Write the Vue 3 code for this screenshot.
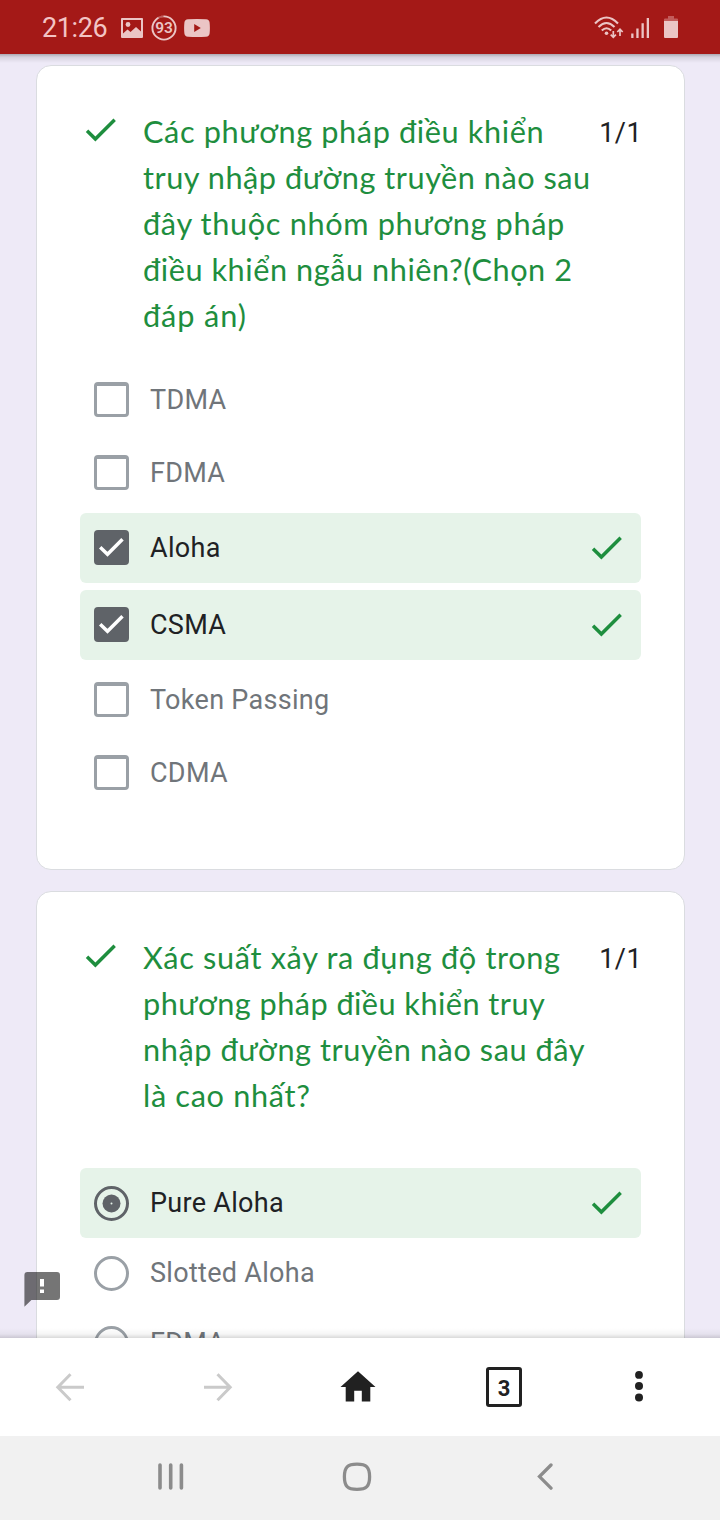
<script setup>
const questions = [
  {
    type: 'checkbox',
    score: '1/1',
    lines: [
      { text: 'Các phương pháp điều khiển', spacing: 0.61 },
      { text: 'truy nhập đường truyền nào sau', spacing: 0.52 },
      { text: 'đây thuộc nhóm phương pháp', spacing: 0.65 },
      { text: 'điều khiển ngẫu nhiên?(Chọn 2', spacing: 0.55 },
      { text: 'đáp án)', spacing: 0.9 },
    ],
    options: [
      { text: 'TDMA' },
      { text: 'FDMA' },
      { text: 'Aloha', correct: true },
      { text: 'CSMA', correct: true },
      { text: 'Token Passing' },
      { text: 'CDMA' },
    ],
  },
  {
    type: 'radio',
    score: '1/1',
    lines: [
      { text: 'Xác suất xảy ra đụng độ trong', spacing: 0.66 },
      { text: 'phương pháp điều khiển truy', spacing: 0.45 },
      { text: 'nhập đường truyền nào sau đây', spacing: 0.57 },
      { text: 'là cao nhất?', spacing: 0.67 },
    ],
    options: [
      { text: 'Pure Aloha', correct: true },
      { text: 'Slotted Aloha' },
      { text: 'FDMA' },
    ],
  },
]
const checkPath = 'M9 16.17L4.83 12l-1.42 1.41L9 19 21 7l-1.41-1.41z'
</script>

<template>
  <div class="screen">
    <header class="status">
      <span class="clock">21:26</span>
      <svg class="s-image" width="22" height="20" viewBox="0 0 22 20">
        <path fill="currentColor" fill-rule="evenodd" d="M1.5 0h19A1.3 1.3 0 0 1 22 1.4v17.2a1.3 1.3 0 0 1-1.4 1.4H1.4A1.3 1.3 0 0 1 0 18.600V1.400A1.300 1.300 0 0 1 1.500 0zM2 2v13.500l4.500-4 3 2.500 5.500-5 5 4.500V2z" />
        <circle cx="7" cy="6.500" r="2.400" fill="currentColor" />
      </svg>
      <span class="s-badge">
        <svg width="26" height="26" viewBox="0 0 26 26">
          <circle cx="13" cy="13" r="11.600" fill="none" stroke="currentColor" stroke-width="1.900" />
          <path d="M7.500 2.800A11.600 11.600 0 0 1 12.500 1.400" fill="none" stroke="#a41917" stroke-opacity=".6" stroke-width="2.200" />
        </svg>
        <b>93</b>
      </span>
      <svg class="s-video" width="26" height="18" viewBox="0 0 26 18">
        <path fill="currentColor" fill-rule="evenodd" d="M4 .3Q13-.3 22 .3q3.300.2 3.600 3.200.6 5.500 0 11-.3 3-3.600 3.200-9 .6-18 0-3.300-.2-3.600-3.200-.6-5.500 0-11Q.7.500 4 .3zM10.200 5v8l6.600-4z" />
      </svg>
      <span class="grow"></span>
      <svg class="s-wifi" width="30" height="24" viewBox="0 0 30 24">
        <g fill="none" stroke="currentColor" stroke-width="2.100">
          <path d="M1 7.500Q12.500-4.500 24 7.500" />
          <path d="M4.500 11Q12.500 3 20.500 11" />
          <path d="M7.800 14.500Q12.500 10 17.200 14.500" />
        </g>
        <circle cx="12.500" cy="17.300" r="1.800" fill="currentColor" />
        <path d="M19.300 15v6M16.700 18.700l2.600 2.600 2.600-2.600M26 20v-6.500M23.300 16l2.700-2.700 2.700 2.700" fill="none" stroke="currentColor" stroke-width="1.700" />
      </svg>
      <svg class="s-signal" width="19" height="20" viewBox="0 0 19 20">
        <path fill="currentColor" d="M.2 15.500h2.300V20H.2zM5.300 10.500h2.300V20H5.300zM10.500 5.200h2.300V20h-2.300zM15.700 0H18v20h-2.300z" />
      </svg>
      <svg class="s-battery" width="14" height="22" viewBox="0 0 14 22">
        <path fill="#c35c5b" d="M4 0h6v2.500h3a1 1 0 0 1 1 1V5H0V3.500a1 1 0 0 1 1-1h3z" />
        <path fill="#ebc5c5" d="M0 5h14v16a1 1 0 0 1-1 1H1a1 1 0 0 1-1-1z" />
      </svg>
    </header>

    <main class="content">
      <section v-for="(q, qi) in questions" :key="qi" class="card">
        <div class="head">
          <svg class="check" width="41" height="41" viewBox="0 0 24 24"><path :d="checkPath" /></svg>
          <h2 class="title">
            <span v-for="l in q.lines" :key="l.text" class="line" :style="{ letterSpacing: l.spacing + 'px' }">{{ l.text }}</span>
          </h2>
          <span class="score">{{ q.score }}</span>
        </div>
        <ul :class="['options', q.type]">
          <li v-for="o in q.options" :key="o.text" :class="['option', { correct: o.correct }]">
            <span :class="['control', q.type, { on: o.correct }]">
              <svg v-if="o.correct && q.type === 'checkbox'" width="35" height="35" viewBox="0 0 35 35">
                <path d="M6.200 17.300L13.500 24.300 28.500 9.200" fill="none" stroke="#fff" stroke-width="3.500" />
              </svg>
              <svg v-else-if="o.correct" width="35" height="35" viewBox="0 0 35 35">
                <circle cx="17.500" cy="17.500" r="9" fill="#5f6368" />
                <circle cx="17.500" cy="17.500" r="1" fill="#e6f3e9" />
              </svg>
            </span>
            <span class="label">{{ o.text }}</span>
            <svg v-if="o.correct" class="check" width="41" height="41" viewBox="0 0 24 24"><path :d="checkPath" /></svg>
          </li>
        </ul>
      </section>

      <svg class="report" width="37" height="35" viewBox="0 0 37 35">
        <path fill="#000" fill-opacity=".54" d="M3.400 0H33a3 3 0 0 1 3 3v22a3 3 0 0 1-3 3H7.400L.4 34.700V3a3 3 0 0 1 3-3z" />
        <path fill="#fff" d="M16 7h4v7.500h-4zM16 17.500h4V21h-4z" />
      </svg>
      <div class="fade top"></div>
      <div class="fade bottom"></div>
    </main>

    <nav class="toolbar">
      <span class="tool">
        <svg width="30" height="30" viewBox="0 0 30 30"><path d="M29 15.200H3M15.500 2.200L2.800 15.200l12.700 13" fill="none" stroke="#cacaca" stroke-width="3" /></svg>
      </span>
      <span class="tool">
        <svg width="30" height="30" viewBox="0 0 30 30"><path d="M1 15.200h26M14.500 2.200l12.700 13-12.700 13" fill="none" stroke="#cacaca" stroke-width="3" /></svg>
      </span>
      <span class="tool">
        <svg width="36" height="32" viewBox="0 0 36 32"><path fill="#212121" d="M18 .2L35.500 16h-5.200V30.500h-8.500V19.800h-7.600V30.500H5.700V16H.5z" /></svg>
      </span>
      <span class="tool"><span class="tabs">3</span></span>
      <span class="tool">
        <svg width="10" height="32" viewBox="0 0 10 32"><g fill="#212121"><circle cx="5" cy="3.900" r="3.900" /><circle cx="5" cy="15" r="4" /><circle cx="5" cy="26.600" r="4" /></g></svg>
      </span>
    </nav>

    <footer class="system">
      <svg width="26" height="28" viewBox="0 0 26 28"><path d="M2 2v23M12.700 2v23M23.400 2v23" stroke="#8c8c8c" stroke-width="3.600" stroke-linecap="round" /></svg>
      <svg class="home-key" width="30" height="30" viewBox="0 0 30 30"><path d="M15 2.200c9.500 0 12.600 3 12.600 12.600S24.500 27.400 15 27.400 2.400 24.400 2.400 14.800 5.500 2.200 15 2.200z" fill="none" stroke="#8c8c8c" stroke-width="3.300" /></svg>
      <svg width="16" height="28" viewBox="0 0 16 28"><path d="M14 2L2.500 13.600 14 25.200" fill="none" stroke="#8c8c8c" stroke-width="3.300" stroke-linecap="round" /></svg>
    </footer>
  </div>
</template>

<style>
body { margin: 0; }
</style>

<style scoped>
.screen {
  width: 720px;
  height: 1520px;
  display: flex;
  flex-direction: column;
  overflow: hidden;
  font-family: Roboto, "Noto Sans", sans-serif;
  background: #eeeaf7;
}
.status {
  height: 54px;
  flex: none;
  box-sizing: border-box;
  padding: 1px 42px 0 42px;
  display: flex;
  align-items: center;
  background: #a41917;
  color: #ebc5c5;
}
.clock { font-size: 27px; line-height: 32px; letter-spacing: -.4px; width: 78.500px; color: #f3c4c4; }
.s-badge { position: relative; width: 26px; height: 26px; margin-left: 8.500px; }
.s-badge svg { display: block; }
.s-badge b { position: absolute; inset: 0; text-align: center; font-size: 15.500px; line-height: 27px; font-weight: 600; }
.s-video { margin-left: 7px; }
.grow { flex: 1; }
.s-signal { margin: 0 14px 0 7px; }
.s-battery { margin-top: -1px; }
.content {
  position: relative;
  flex: none;
  height: 1284px;
  box-sizing: border-box;
  overflow: hidden;
  padding: 11px 35px 0 36px;
}
.card {
  box-sizing: border-box;
  background: #fff;
  border: 1px solid #dadce0;
  border-radius: 15px;
  height: 805px;
  padding: 43px 43px 0;
  margin-bottom: 21px;
}
.head { display: flex; align-items: flex-start; }
.check { display: block; flex: none; fill: #1e8e3e; }
.title {
  margin: 0 0 0 22px;
  flex: 1;
  min-width: 0;
  font: 400 30.700px/46px Lato, "Noto Sans", sans-serif;
  color: #1e8e3e;
}
.line { display: block; white-space: nowrap; height: 46px; }
.score { font-size: 27px; line-height: 46px; letter-spacing: .4px; color: #202124; margin: 1px -1px 0 0; }
.options { display: flex; flex-direction: column; list-style: none; margin: 24px 0 0; padding: 0; }
.options.radio { margin-top: 49px; }
.option {
  height: 73px;
  flex: none;
  display: flex;
  align-items: center;
  box-sizing: border-box;
  padding: 0 14px;
  color: #70757a;
  border-radius: 6px;
}
.radio .option { height: 70px; }
.option.correct { height: 70px; background: #e6f3e9; color: #202124; margin: 4px 0 3px; }
.radio .option.correct { margin: 0; }
.label { flex: 1; margin-left: 21px; font-size: 27px; line-height: 38px; letter-spacing: .3px; }
.control {
  width: 35px;
  height: 35px;
  box-sizing: border-box;
  border: 3px solid #9aa0a6;
  border-radius: 4px;
  display: flex;
  align-items: center;
  justify-content: center;
  flex: none;
}
.control svg { flex: none; }
.control.checkbox { border-top-width: 4px; }
.control.checkbox.on { background: #5f6368; border: 0; margin-bottom: 1px; }
.control.radio { border-radius: 50%; margin-top: 1px; }
.control.radio.on { border-color: #5f6368; }
.option .check { margin-bottom: 1px; }
.report { position: absolute; left: 24px; top: 1218px; }
.fade { position: absolute; left: 0; right: 0; }
.fade.top { top: 0; height: 9px; background: linear-gradient(rgba(0, 0, 0, .28), rgba(0, 0, 0, .1) 35%, transparent); }
.fade.bottom { bottom: 0; height: 10px; background: linear-gradient(transparent, rgba(0, 0, 0, .04) 60%, rgba(0, 0, 0, .15)); }
.toolbar {
  height: 98px;
  flex: none;
  background: #fff;
  display: grid;
  grid-template-columns: 140px 156px 124px 168px 102px;
  align-items: center;
}
.tool { display: flex; justify-content: center; }
.tabs {
  width: 36px;
  height: 40px;
  box-sizing: border-box;
  border: 3px solid #212121;
  border-radius: 3px;
  text-align: center;
  font-size: 22px;
  line-height: 37px;
  font-weight: 700;
  color: #212121;
}
.system { height: 84px; flex: none; box-sizing: border-box; background: #f1f1f1; display: flex; align-items: center; justify-content: space-between; padding: 0 167px 2px 158px; }
.home-key { margin-right: 7px; }
</style>
